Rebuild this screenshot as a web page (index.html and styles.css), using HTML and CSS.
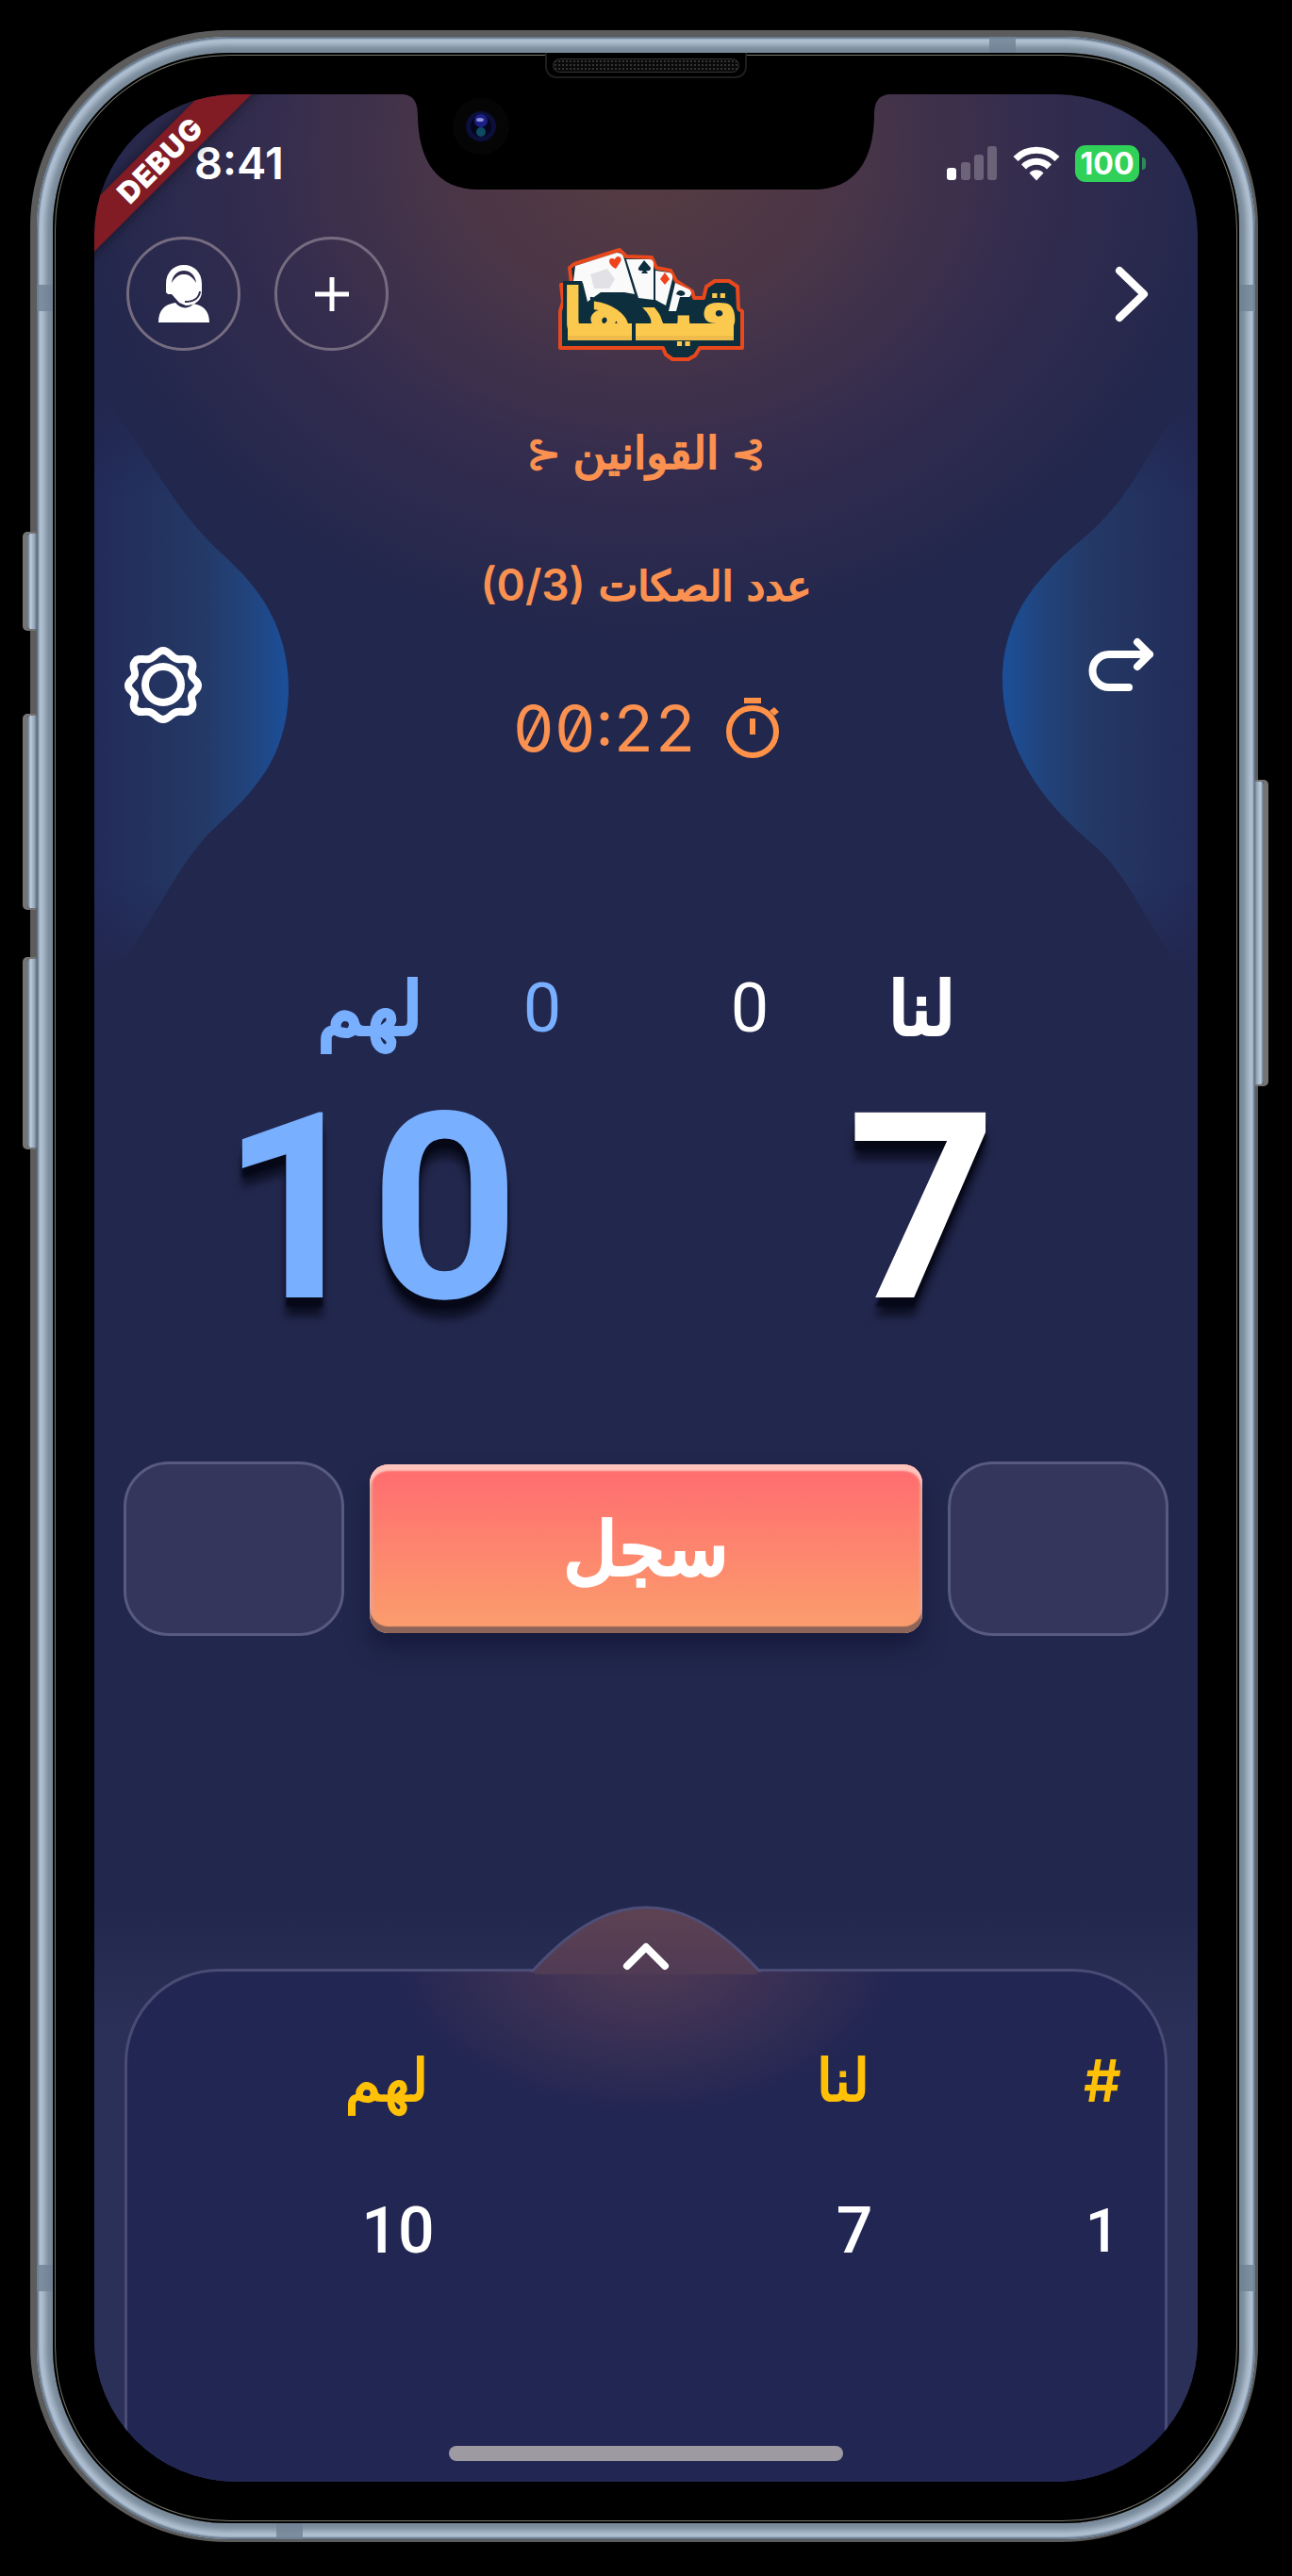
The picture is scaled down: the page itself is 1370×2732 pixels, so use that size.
FILE: index.html
```html
<!DOCTYPE html>
<html lang="ar">
<head>
<meta charset="utf-8">
<meta name="viewport" content="width=device-width, initial-scale=1">
<title>قيدها</title>
<link rel="stylesheet" href="styles.css">
</head>
<body>
<div class="device">
  <i class="key key-mute"></i>
  <i class="key key-up"></i>
  <i class="key key-down"></i>
  <i class="key key-power"></i>
  <i class="band band-left-top"></i>
  <i class="band band-right-top"></i>
  <i class="band band-left-bottom"></i>
  <i class="band band-right-bottom"></i>
  <i class="band band-top"></i>
  <i class="band band-bottom"></i>
  <div class="bezel">
    <div class="speaker"><i></i></div>
    <main class="screen">
      <svg class="notch" width="516" height="102" viewBox="0 0 516 102" aria-hidden="true">
        <path d="M0 0C13 1 16 10 16 24C17 70 36 101 80 101H436C480 101 499 70 500 24C500 10 503 1 516 0Z" fill="#000"/>
        <circle cx="83" cy="34" r="30" fill="#060506"/>
        <circle cx="83" cy="34" r="16" fill="#0b0f3a"/>
        <circle cx="83" cy="34" r="11" fill="#05061c"/>
        <circle cx="83" cy="28" r="7" fill="#1c1f86"/>
        <circle cx="83" cy="40" r="5" fill="#0d4a63"/>
        <ellipse cx="82" cy="27" rx="4" ry="2" fill="#8d90d8"/>
      </svg>
      <div class="debug">DEBUG</div>

      <div class="status">
        <span class="time">8:41</span>
        <div class="status-icons">
          <svg width="54" height="36" viewBox="0 0 54 36" aria-hidden="true">
            <rect x="0" y="23" width="10" height="13" rx="3" fill="#fff"/>
            <g fill="#fff" opacity=".25"><rect x="15" y="17" width="10" height="19" rx="3"/><rect x="29" y="9" width="10" height="27" rx="3"/><rect x="43" y="0" width="10" height="36" rx="3"/></g>
          </svg>
          <svg width="50" height="37" viewBox="0 0 50 37" aria-hidden="true">
            <g fill="none" stroke="#fff" stroke-width="7"><path d="M3 13.500A31 31 0 0 1 47 13.500"/><path d="M11.500 22A19 19 0 0 1 38.500 22"/></g>
            <path d="M17.500 28.500A10.500 10.500 0 0 1 32.500 28.500L25 36.500Z" fill="#fff"/>
          </svg>
          <span class="battery">100</span>
        </div>
      </div>

      <header class="top">
        <div class="top-actions">
          <button class="round" aria-label="الدعم">
            <svg width="54" height="61" viewBox="0 0 54 61" aria-hidden="true">
              <path d="M8 29V20C8 8 16 0 27 0S46 8 46 20V28C46 38 38 43 29 43L22 40L14 31H10Z" fill="#fff"/>
              <path d="M14 19C15 10 21 6 27 6S39 10 40 19C35 11 31 10 27 10S19 11 14 19Z" fill="#2f2c4d"/>
              <path d="M44 28C43 36 37 39 28 39" fill="none" stroke="#2f2c4d" stroke-width="2"/>
              <path d="M0 61C0 48 6 42 18 40C23 47 33 47 37 41C48 43 54 49 54 61Z" fill="#fff"/>
            </svg>
          </button>
          <button class="round" aria-label="إضافة">
            <svg width="38" height="38" viewBox="0 0 38 38" aria-hidden="true"><path d="M19 1V37M1 19H37" stroke="#fff" stroke-width="5" fill="none"/></svg>
          </button>
        </div>
        <svg class="logo" width="198" height="144" viewBox="0 0 198 144" role="img" aria-label="قيدها">
          <path d="M3 62H14L12 44L17 40L65 25L72 32L99 33L104 44L119 47L125 58L142 69L144 76H154L157 64L166 58H181L190 64L191 88L195 90V129H150L145 137L138 141H121L114 136L111 129H2V90L5 80Z" fill="#0d2f3d" stroke="#e8481c" stroke-width="4" stroke-linejoin="round"/>
          <g fill="#fbfafa">
            <path d="M18 42L62 28Q67 28 69 32L81 72L70 70L45 70L31 80L26 60L16 58Z"/>
            <path d="M72 35H96Q101 35 101 40V78L85 76Z"/>
            <path d="M103 47L117 49Q122 50 121 56L114 84L103 78Z"/>
            <path d="M124 60L139 67Q143 71 139 75L129 75L125 90H117Z"/>
          </g>
          <path d="M34 51L52 45L60 56L54 66L38 66Z" fill="#e2e2e6"/>
          <path d="M61 45C50 39 54 31 60 35C62 29 70 33 65 39Z" fill="#f0431d"/>
          <path d="M91 36L98 44Q98 48 93 47L95 50H88L90 47Q84 48 85 44Z" fill="#0d2f3d"/>
          <path d="M113 49L118 56L113 62L108 56Z" fill="#f0431d"/>
          <path d="M125 72Q127 66 133 69Q137 73 130 74Z" fill="#0d2f3d"/>
          <text x="98" y="115" text-anchor="middle" class="logo-text">قيدها</text>
          <path d="M10 103H78V121H10ZM82 103H186V121H82Z" fill="#fcc94f"/>
          <path d="M10 116H78V121H10ZM82 116H186V121H82Z" fill="#efbb4a"/>
        </svg>
        <button class="plain next" aria-label="التالي">
          <svg width="36" height="60" viewBox="0 0 36 60" aria-hidden="true"><path d="M5 5L31 30L5 55" fill="none" stroke="#fff" stroke-width="8" stroke-linecap="round" stroke-linejoin="round"/></svg>
        </button>
      </header>

      <button class="side side-left" aria-label="الإعدادات">
        <svg width="208" height="640" viewBox="0 0 208 640" aria-hidden="true">
          <defs><linearGradient id="gl"><stop offset="0" stop-color="#232a58"/><stop offset=".55" stop-color="#243966"/><stop offset=".8" stop-color="#21447d"/><stop offset="1" stop-color="#1b4f9a"/></linearGradient>
          <linearGradient id="fade" x2="0" y2="1"><stop offset="0" stop-color="#fff" stop-opacity="0"/><stop offset=".18" stop-color="#fff"/><stop offset=".82" stop-color="#fff"/><stop offset="1" stop-color="#fff" stop-opacity="0"/></linearGradient>
          <mask id="m"><rect width="208" height="640" fill="url(#fade)"/></mask></defs>
          <path mask="url(#m)" d="M0 0C40 40 70 108 116 158C132 176 150 188 170 214C193 243 206 280 206 320C206 362 192 398 170 424C150 450 132 462 116 480C74 528 56 590 0 640Z" fill="url(#gl)"/>
          <g transform="translate(0 2)" fill="none" stroke="#fff" stroke-width="8" stroke-linejoin="round"><circle cx="73" cy="314" r="19"/>
          <path d="M73 278C80 278 81 286 88 287C95 288 100 285 103 290C107 295 102 299 103 304C104 309 110 309 110 315C110 321 104 321 103 326C102 331 107 335 103 340C99 345 95 342 88 343C81 344 80 351 73 351C66 351 65 344 58 343C51 342 47 345 43 340C39 335 44 331 43 326C42 321 36 321 36 315C36 309 42 309 43 304C44 299 39 295 43 290C46 285 51 288 58 287C65 286 66 278 73 278Z"/></g>
        </svg>
      </button>
      <button class="side side-right" aria-label="تراجع">
        <svg width="208" height="640" viewBox="0 0 208 640" aria-hidden="true">
          <defs><linearGradient id="gr" x1="1" x2="0"><stop offset="0" stop-color="#232a58"/><stop offset=".55" stop-color="#243966"/><stop offset=".8" stop-color="#21447d"/><stop offset="1" stop-color="#1b4f9a"/></linearGradient></defs>
          <path mask="url(#m)" d="M208 0C168 40 150 96 112 136C92 160 64 176 44 202C16 232 1 270 1 310C1 352 14 386 36 420C52 444 72 464 95 484C140 520 160 590 208 640Z" fill="url(#gr)"/>
          <path d="M135 319H114A17 17 0 0 1 114 284H157M144 271L157 284L144 297" fill="none" stroke="#fff" stroke-width="8" stroke-linecap="round" stroke-linejoin="round"/>
        </svg>
      </button>

      <section class="info">
        <a class="rules" href="#rules"><span>⊱</span><span class="arabic" dir="rtl">القوانين</span><span>⊰</span></a>
        <p class="deals arabic" dir="rtl">عدد الصكات <bdi class="latin">(0/3)</bdi></p>
        <div class="timer">
          <span>00:22</span>
          <svg width="56" height="64" viewBox="0 0 56 64" aria-hidden="true"><circle cx="28" cy="36" r="25" fill="none" stroke="#ff9248" stroke-width="6"/><path d="M19 0H37V6H19ZM25 22H31V39H25ZM46 14L51 10L56 15L51 19Z" fill="#ff9248"/></svg>
        </div>
      </section>

      <section class="scores">
        <div class="team us">
          <div class="team-head"><span class="extra">0</span><h2 class="arabic">لنا</h2></div>
          <p class="total">7</p>
        </div>
        <div class="team them">
          <div class="team-head"><h2 class="arabic">لهم</h2><span class="extra">0</span></div>
          <p class="total">10</p>
        </div>
      </section>

      <form class="entry" dir="rtl">
        <input type="text" inputmode="numeric" aria-label="لنا">
        <button class="arabic" type="button">سجل</button>
        <input type="text" inputmode="numeric" aria-label="لهم">
      </form>

      <section class="sheet-zone">
        <div class="sheet">
          <button class="plain handle" aria-label="عرض السجل">
            <svg width="246" height="76" viewBox="0 0 246 76" aria-hidden="true">
              <defs><linearGradient id="bump" x2="0" y2="1"><stop offset="0" stop-color="#5d4252"/><stop offset="1" stop-color="#503b55"/></linearGradient></defs>
              <path d="M3 70C40 30 78 3 123 3S206 30 243 70L240 74H6Z" fill="url(#bump)"/>
              <path d="M0 70H3C40 30 78 3 123 3S206 30 243 70H246" fill="none" stroke="#4e4e78" stroke-width="3"/>
              <path d="M103 65L123 45L143 65" fill="none" stroke="#fff" stroke-width="8" stroke-linecap="round" stroke-linejoin="round"/>
            </svg>
          </button>
          <table dir="rtl">
            <thead><tr><th class="no">#</th><th class="col-us arabic">لنا</th><th class="arabic">لهم</th></tr></thead>
            <tbody><tr><td class="index">1</td><td>7</td><td>10</td></tr></tbody>
          </table>
          <div class="home"></div>
        </div>
      </section>
    </main>
  </div>
</div>
</body>
</html>
```
FILE: styles.css
```css
* { box-sizing: border-box; }
body { margin: 0; background: #000; color: #fff; font-family: Inter, "DejaVu Sans", sans-serif; }
h2, p { margin: 0; }
button { font: inherit; color: inherit; cursor: pointer; }
svg { display: block; }
.arabic { font-family: "DejaVu Sans", sans-serif; font-weight: 400; -webkit-text-stroke: 2px currentColor; }

.device {
  position: relative;
  margin: 39px;
  padding: 17px;
  border-radius: 204px;
  background: #788999;
  box-shadow: -2px -2px 0 5px #5c5c5c, inset 0 0 2px 2px #5f7186, inset 0 0 6px 9px #b4c4d6;
}
.bezel {
  position: relative;
  padding: 44px;
  border-radius: 187px;
  background: #000;
  box-shadow: inset 0 0 0 2px #000, inset 0 0 0 3px #77776f;
}
.key { position: absolute; width: 10px; background: linear-gradient(90deg, #5d6d80, #bccbdc 35%, #93a4b6 75%, #5d6d80); border-radius: 3px 0 0 3px; box-shadow: -3px 0 0 2px #747474; }
.key-mute { left: -10px; top: 527px; height: 101px; }
.key-up { left: -10px; top: 720px; height: 204px; }
.key-down { left: -10px; top: 978px; height: 200px; }
.key-power { right: -9px; top: 790px; height: 321px; transform: scaleX(-1); }
.band { position: absolute; background: #6f8293; opacity: .8; }
.band-left-top, .band-right-top, .band-left-bottom, .band-right-bottom { width: 17px; height: 28px; }
.band-left-top { left: 0; top: 263px; }
.band-right-top { right: 0; top: 263px; }
.band-left-bottom { left: 0; bottom: 263px; }
.band-right-bottom { right: 0; bottom: 263px; }
.band-top, .band-bottom { width: 28px; height: 17px; }
.band-top { right: 254px; top: 0; }
.band-bottom { left: 254px; bottom: 0; }
.speaker {
  position: absolute; top: 0; left: 50%; width: 214px; height: 27px; margin-left: -107px;
  padding: 6px; border: 2px solid #1d1d1d; border-top: 0; border-radius: 0 0 12px 12px; background: #000;
}
.speaker i { display: block; height: 15px; border: 1px solid #333; border-radius: 8px; background: radial-gradient(circle, #333 0 1px, #0a0a0a 1px) 0 0 / 4px 4px; }

.screen {
  position: relative;
  overflow: hidden;
  border-radius: 150px;
  background: radial-gradient(ellipse 620px 520px at 50% 60px, #573c40 0, #4b3647 32%, #352d4e 64%, rgba(34, 39, 77, 0) 100%), #22274d;
}
.notch { position: absolute; top: 0; left: 50%; margin-left: -258px; }
.debug {
  position: absolute; top: 51px; left: -130px; width: 400px; height: 38px;
  transform: rotate(-45deg);
  background: #811b24; box-shadow: 0 0 14px rgba(0, 0, 0, .5);
  font: 900 31px/38px Inter, sans-serif; text-align: center; letter-spacing: 1px;
}

.status { display: flex; justify-content: space-between; align-items: center; height: 146px; padding: 0 62px 0 106px; }
.time { font-size: 47px; font-weight: 600; line-height: 60px; }
.status-icons { display: flex; align-items: center; gap: 16px; }
.battery { position: relative; width: 68px; height: 39px; border-radius: 11px; background: #30d158; font-size: 32px; font-weight: 700; line-height: 39px; text-align: center; }
.battery::after { content: ""; position: absolute; right: -7px; top: 13px; width: 4px; height: 13px; border-radius: 0 4px 4px 0; background: #2c8a55; }

.top { display: grid; grid-template-columns: 1fr auto 1fr; align-items: center; padding: 5px 34px 0; }
.top-actions { display: flex; gap: 36px; }
.round { display: grid; place-items: center; width: 121px; height: 121px; padding: 0; border: 3px solid #766c80; border-radius: 50%; background: none; }
.plain { padding: 0; border: 0; background: none; }
.logo { margin: -12px 0 -12px 12px; }
.logo-text { font: 700 70px "DejaVu Sans", sans-serif; fill: #fcc94f; stroke: #0d2f3d; stroke-width: 8px; paint-order: stroke; }
.next { justify-self: end; margin-right: 18px; }

.side { position: absolute; top: 310px; padding: 0; border: 0; background: none; }
.side-left { left: 0; }
.side-right { right: 0; }

.info { display: flex; flex-direction: column; align-items: center; padding-top: 78px; color: #fa9150; }
.rules { display: flex; gap: 12px; color: inherit; text-decoration: none; font-size: 46px; font-weight: 700; line-height: 60px; }
.rules .arabic { font-size: 48px; }
.deals { margin-top: 80px; font-size: 44px; line-height: 60px; }
.latin { font-family: Inter, sans-serif; font-size: 46px; font-weight: 600; -webkit-text-stroke: 0; }
.timer { display: flex; align-items: center; gap: 32px; margin-top: 84px; font-size: 68px; font-weight: 400; line-height: 72px; font-variant-numeric: tabular-nums slashed-zero; }

.scores { display: flex; flex-direction: row-reverse; margin-top: 222px; }
.team { flex: 1; text-align: center; }
.team-head { display: grid; grid-template-columns: 220px 1fr 220px; align-items: center; height: 80px; }
.team-head h2 { grid-column: 2; grid-row: 1; font-size: 78px; line-height: 80px; -webkit-text-stroke-width: 4px; }
.extra { grid-row: 1; font: 400 72px/80px Roboto, sans-serif; }
.us .extra { grid-column: 1; }
.them .extra { grid-column: 3; }
.them { color: #78afff; }
.total { margin-top: 12px; font: 700 276px/320px Roboto, sans-serif; text-shadow: 0 10px 3px rgba(5, 8, 22, .9), 0 20px 8px rgba(5, 8, 22, .7); }

.entry { display: grid; grid-template-columns: 2fr 5fr 2fr; gap: 27px; align-items: center; padding: 0 31px; margin-top: 108px; }
.entry input { width: 100%; min-width: 0; height: 185px; border: 3px solid #585a81; border-radius: 48px; background: #34365c; color: #fff; font-size: 60px; text-align: center; }
.entry button {
  height: 179px; padding: 0; border: 0; border-radius: 20px;
  background: linear-gradient(#ff6b70, #fb9f6c);
  box-shadow: inset 0 7px 2px #ffc4bc, inset 0 -7px 1px #8d6459, inset 3px 0 2px #e6a293, inset -3px 0 2px #e6a293, 0 16px 24px rgba(14, 18, 50, .6);
  font-size: 78px; -webkit-text-stroke-width: 4px;
}

.sheet-zone { margin-top: 284px; padding: 69px 32px 0; background: linear-gradient(rgba(43, 48, 88, 0), #2b3058 130px); }
.sheet {
  position: relative; padding: 35px 0 22px;
  border: solid #4a4c76; border-width: 3px 3px 0; border-radius: 100px 100px 0 0;
  background: radial-gradient(ellipse 270px 170px at 50% -20px, #533b55, rgba(34, 38, 83, 0)), #222653;
}
.handle { position: absolute; top: -71px; left: 50%; margin-left: -123px; }
table { width: 100%; table-layout: fixed; border-collapse: collapse; font-size: 64px; font-weight: 500; }
th, td { height: 160px; padding: 0; text-align: center; }
th { color: #ffc107; font-size: 62px; }
.no { width: 12%; font-weight: 600; }
.col-us { width: 38%; }
td { padding-left: 24px; font-family: Roboto, sans-serif; font-size: 68px; }
td.index { padding: 0; font-size: 64px; }
.home { width: 418px; height: 16px; margin: 148px auto 0; border-radius: 8px; background: #9d9ba1; }
```
